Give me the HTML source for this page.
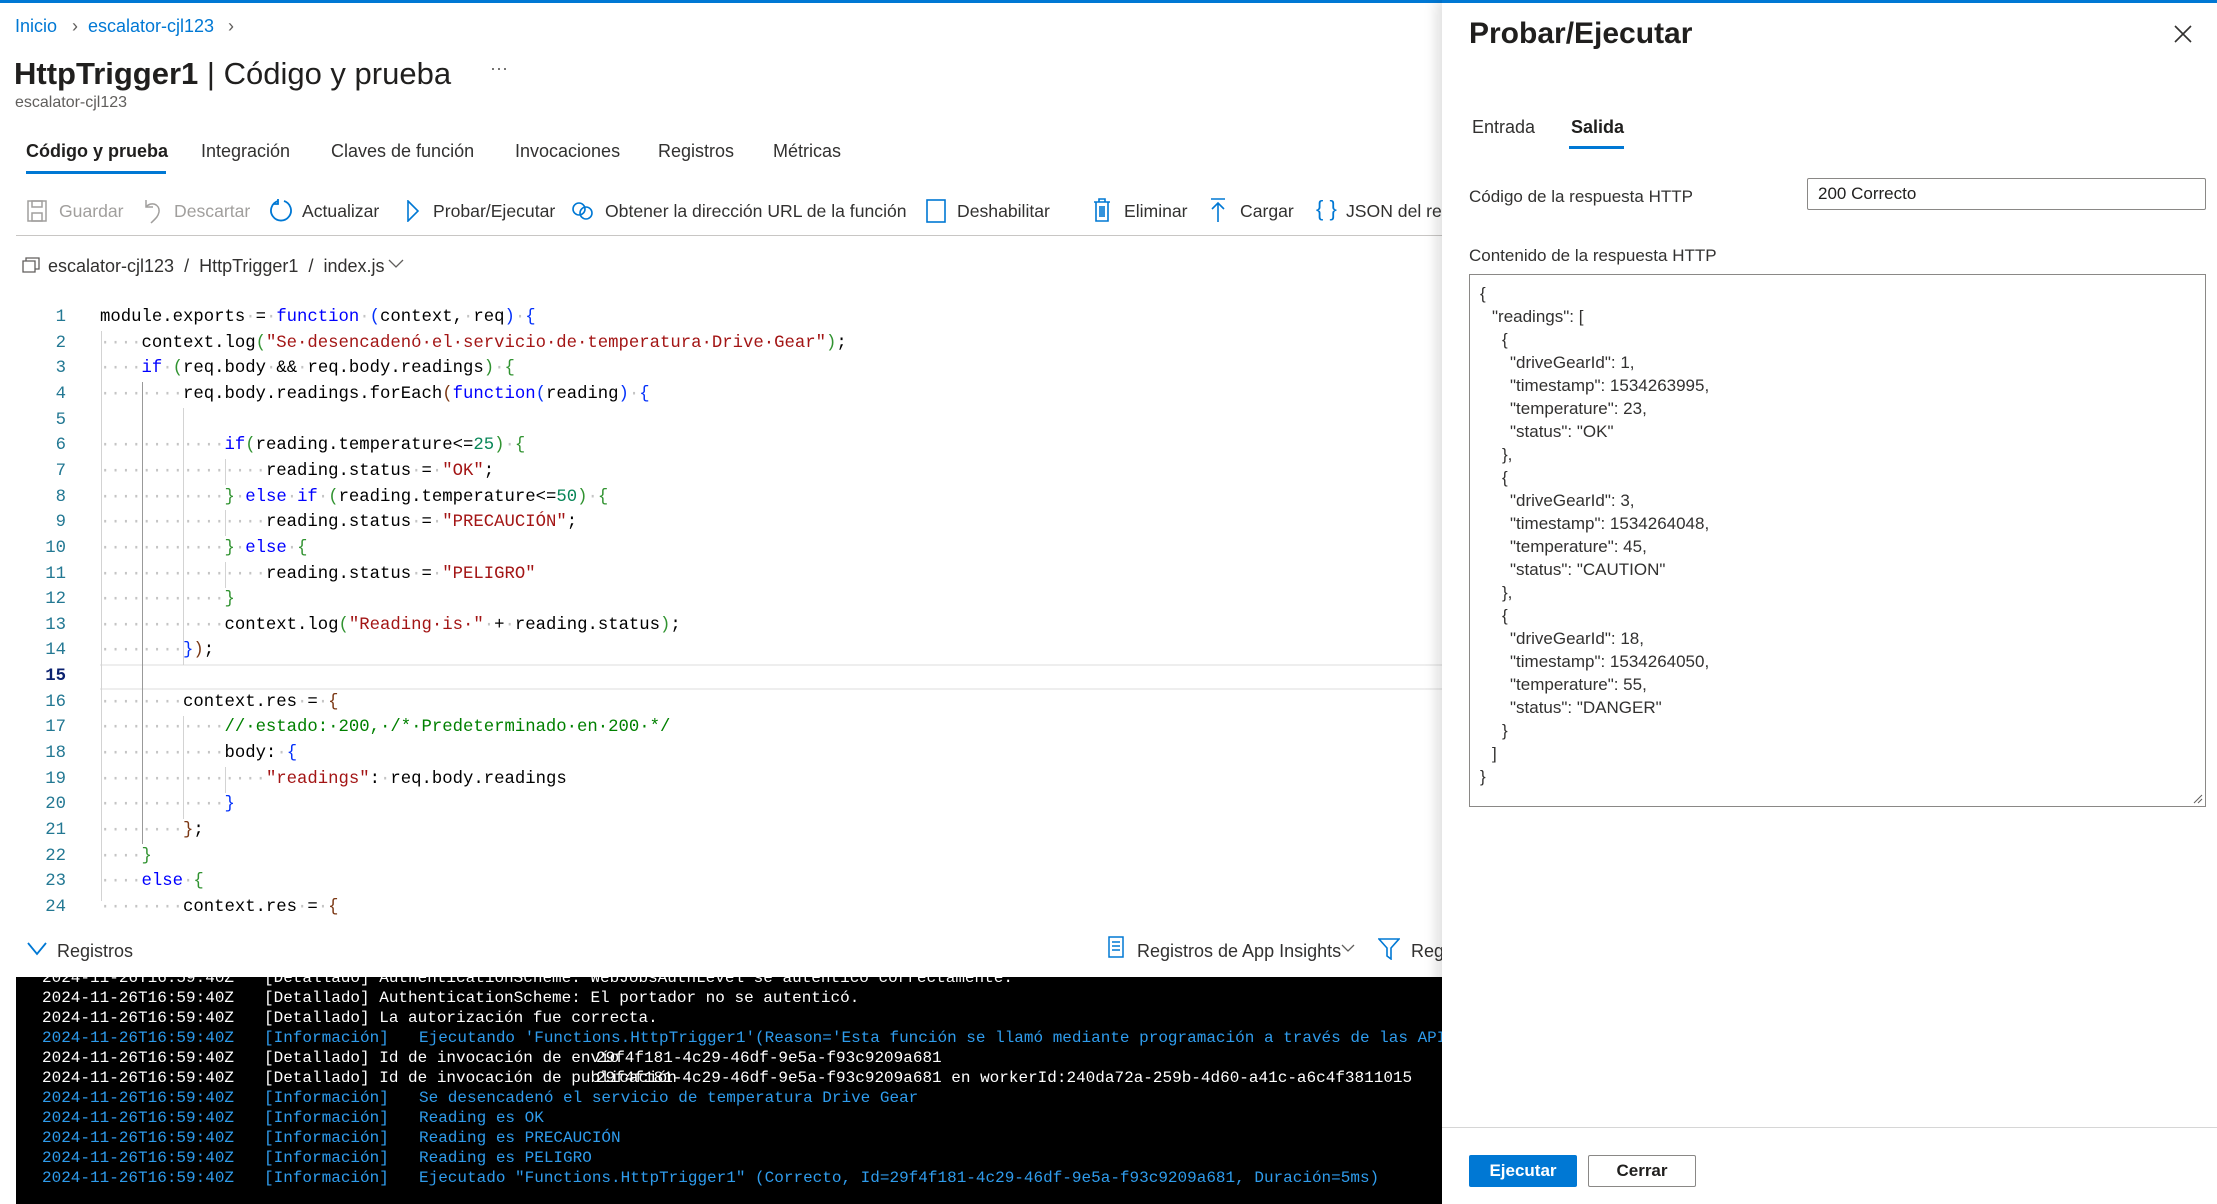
<!DOCTYPE html>
<html><head><meta charset="utf-8">
<style>
*{box-sizing:border-box;margin:0;padding:0}
body{width:2217px;height:1204px;position:relative;overflow:hidden;background:#fff;font-family:"Liberation Sans",sans-serif;color:#323130}
.a{position:absolute;white-space:nowrap}
.topbar{position:absolute;left:0;top:0;width:2217px;height:3px;background:#0078d4}
.ui{font-size:18px;line-height:24px}
.tb{font-size:17.6px;line-height:24px;top:199px}
.dis{color:#a19f9d}
.code{position:absolute;left:0;top:305px;width:1442px;height:620px;overflow:hidden;font-family:"Liberation Mono",monospace;font-size:17.3px}
.ln{position:absolute;left:0;width:66px;text-align:right;color:#237893;line-height:25.65px}
.cl{position:absolute;left:100px;line-height:25.65px;white-space:pre;color:#000}
.k{color:#0000ff}.s{color:#a31515}.n{color:#098658}.c{color:#008000}.d{color:#c4c4c4}
.b1{color:#0431fa}.b2{color:#319331}.b3{color:#7b3814}
.g{position:absolute;width:1px;background:#d3d3d3}
.term{position:absolute;left:16px;top:977px;width:1426px;height:227px;background:#000;overflow:hidden;font-family:"Liberation Mono",monospace;font-size:16px}
.tl{position:absolute;left:0;width:1426px;height:20px;line-height:20px;white-space:pre}
.tl span{position:absolute}
.w{color:#fff}.cy{color:#2f9cec}
.panel{position:absolute;left:1442px;top:0;width:775px;height:1204px;background:#fff;box-shadow:-6px 0 12px rgba(0,0,0,0.12)}
.json{position:absolute;left:1469px;top:274px;width:737px;height:533px;border:1px solid #8a8886;font-size:17px;line-height:22.96px;color:#323130}
.json div{position:absolute;white-space:pre}
</style></head><body>
<div class="topbar"></div>

<div class="a ui" style="left:15px;top:14px;color:#0078d4">Inicio</div>
<div class="a ui" style="left:72px;top:14px;color:#605e5c">&#8250;</div>
<div class="a ui" style="left:88px;top:14px;color:#0078d4">escalator-cjl123</div>
<div class="a ui" style="left:228px;top:14px;color:#605e5c">&#8250;</div>

<div class="a" style="left:14px;top:54px;font-size:31px;line-height:40px;color:#201f1e"><b style="font-weight:600">HttpTrigger1</b> | Código y prueba</div>
<div class="a" style="left:490px;top:58px;font-size:18px;color:#605e5c">···</div>
<div class="a" style="left:15px;top:94px;font-size:16px;color:#605e5c">escalator-cjl123</div>

<div class="a ui" style="left:26px;top:139px;color:#201f1e;font-weight:600">Código y prueba</div>
<div class="a" style="left:26px;top:171px;width:140px;height:3px;background:#0078d4"></div>
<div class="a ui" style="left:201px;top:139px">Integración</div>
<div class="a ui" style="left:331px;top:139px">Claves de función</div>
<div class="a ui" style="left:515px;top:139px">Invocaciones</div>
<div class="a ui" style="left:658px;top:139px">Registros</div>
<div class="a ui" style="left:773px;top:139px">Métricas</div>

<svg class="a" style="left:27px;top:200px" width="20" height="22" viewBox="0 0 20 22" fill="none" stroke="#a19f9d" stroke-width="1.5"><rect x="1" y="1" width="18" height="20"/><rect x="5" y="1" width="10" height="6"/><rect x="5" y="13" width="10" height="8"/></svg>
<div class="a tb dis" style="left:59px">Guardar</div>
<svg class="a" style="left:143px;top:198px" width="20" height="26" viewBox="0 0 20 26" fill="none" stroke="#a19f9d" stroke-width="1.5"><path d="M3 2v7h7"/><path d="M3 9c5-6 14-3 13 5c-1 5-4 7-8 11"/></svg>
<div class="a tb dis" style="left:174px">Descartar</div>
<svg class="a" style="left:269px;top:198px" width="24" height="26" viewBox="0 0 24 26" fill="none" stroke="#0078d4" stroke-width="1.8"><path d="M9 3a10 10 0 1 0 6 0"/><path d="M9 1v5h-5"/></svg>
<div class="a tb" style="left:302px">Actualizar</div>
<svg class="a" style="left:406px;top:200px" width="14" height="22" viewBox="0 0 14 22" fill="none" stroke="#0078d4" stroke-width="1.6"><path d="M2 1l10 10l-10 10z"/></svg>
<div class="a tb" style="left:433px">Probar/Ejecutar</div>
<svg class="a" style="left:571px;top:201px" width="24" height="20" viewBox="0 0 24 20" fill="none" stroke="#0078d4" stroke-width="1.6"><circle cx="8" cy="8" r="6"/><circle cx="15" cy="12" r="6"/></svg>
<div class="a tb" style="left:605px">Obtener la dirección URL de la función</div>
<svg class="a" style="left:926px;top:199px" width="20" height="24"><rect x="1" y="1" width="18" height="22" fill="none" stroke="#0078d4" stroke-width="1.6"/></svg>
<div class="a tb" style="left:957px">Deshabilitar</div>
<svg class="a" style="left:1093px;top:198px" width="18" height="24" viewBox="0 0 18 24" fill="none" stroke="#0078d4" stroke-width="1.6"><path d="M1 4h16M6 4V1h6v3M3 4v19h12V4M7 8v11M9 8v11M11 8v11"/></svg>
<div class="a tb" style="left:1124px">Eliminar</div>
<svg class="a" style="left:1210px;top:198px" width="16" height="24" viewBox="0 0 16 24" fill="none" stroke="#0078d4" stroke-width="1.6"><path d="M1 1h14M8 5v19M2 11l6-6l6 6"/></svg>
<div class="a tb" style="left:1240px">Cargar</div>
<div class="a" style="left:1316px;top:196px;font-size:22px;color:#0078d4">{ }</div>
<div class="a" style="left:1346px;top:199px;font-size:17.6px;line-height:24px;width:96px;overflow:hidden">JSON del request</div>
<div class="a" style="left:16px;top:235px;width:1426px;height:1px;background:#c8c6c4"></div>

<svg class="a" style="left:22px;top:257px" width="18" height="16" viewBox="0 0 18 16" fill="none" stroke="#605e5c" stroke-width="1.3"><path d="M1 4h12v11H1zM4 4V1h13v11h-4"/></svg>
<div class="a ui" style="left:48px;top:254px">escalator-cjl123 &nbsp;/&nbsp; HttpTrigger1 &nbsp;/&nbsp; index.js</div>
<svg class="a" style="left:388px;top:259px" width="16" height="10" viewBox="0 0 16 10" fill="none" stroke="#605e5c" stroke-width="1.3"><path d="M1 1l7 7l7-7"/></svg>

<div class="code">
<div class="a" style="left:100px;top:359px;width:1342px;height:26px;border-top:2px solid #eee;border-bottom:2px solid #eee"></div>
<div class="g" style="left:101px;top:26px;height:570px"></div>
<div class="g" style="left:142px;top:77px;height:462px;background:#999"></div>
<div class="g" style="left:183px;top:103px;height:257px"></div>
<div class="g" style="left:183px;top:411px;height:103px"></div>
<div class="g" style="left:225px;top:154px;height:26px"></div>
<div class="g" style="left:225px;top:205px;height:26px"></div>
<div class="g" style="left:225px;top:257px;height:26px"></div>
<div class="g" style="left:225px;top:462px;height:26px"></div>

<div class="ln" style="top:0">1</div><div class="ln" style="top:25.65px">2</div><div class="ln" style="top:51.3px">3</div><div class="ln" style="top:76.95px">4</div><div class="ln" style="top:102.6px">5</div><div class="ln" style="top:128.25px">6</div><div class="ln" style="top:153.9px">7</div><div class="ln" style="top:179.55px">8</div><div class="ln" style="top:205.2px">9</div><div class="ln" style="top:230.85px">10</div><div class="ln" style="top:256.5px">11</div><div class="ln" style="top:282.15px">12</div><div class="ln" style="top:307.8px">13</div><div class="ln" style="top:333.45px">14</div><div class="ln" style="top:359.1px;color:#0b216f;font-weight:bold">15</div><div class="ln" style="top:384.75px">16</div><div class="ln" style="top:410.4px">17</div><div class="ln" style="top:436.05px">18</div><div class="ln" style="top:461.7px">19</div><div class="ln" style="top:487.35px">20</div><div class="ln" style="top:513px">21</div><div class="ln" style="top:538.65px">22</div><div class="ln" style="top:564.3px">23</div><div class="ln" style="top:589.95px">24</div>

<div class="cl" style="top:0">module.exports<span class="d">·</span>=<span class="d">·</span><span class="k">function</span><span class="d">·</span><span class="b1">(</span>context,<span class="d">·</span>req<span class="b1">)</span><span class="d">·</span><span class="b1">{</span></div>
<div class="cl" style="top:25.65px"><span class="d">····</span>context.log<span class="b2">(</span><span class="s">"Se·desencadenó·el·servicio·de·temperatura·Drive·Gear"</span><span class="b2">)</span>;</div>
<div class="cl" style="top:51.3px"><span class="d">····</span><span class="k">if</span><span class="d">·</span><span class="b2">(</span>req.body<span class="d">·</span>&amp;&amp;<span class="d">·</span>req.body.readings<span class="b2">)</span><span class="d">·</span><span class="b2">{</span></div>
<div class="cl" style="top:76.95px"><span class="d">········</span>req.body.readings.forEach<span class="b3">(</span><span class="k">function</span><span class="b1">(</span>reading<span class="b1">)</span><span class="d">·</span><span class="b1">{</span></div>
<div class="cl" style="top:128.25px"><span class="d">············</span><span class="k">if</span><span class="b2">(</span>reading.temperature&lt;=<span class="n">25</span><span class="b2">)</span><span class="d">·</span><span class="b2">{</span></div>
<div class="cl" style="top:153.9px"><span class="d">················</span>reading.status<span class="d">·</span>=<span class="d">·</span><span class="s">"OK"</span>;</div>
<div class="cl" style="top:179.55px"><span class="d">············</span><span class="b2">}</span><span class="d">·</span><span class="k">else</span><span class="d">·</span><span class="k">if</span><span class="d">·</span><span class="b2">(</span>reading.temperature&lt;=<span class="n">50</span><span class="b2">)</span><span class="d">·</span><span class="b2">{</span></div>
<div class="cl" style="top:205.2px"><span class="d">················</span>reading.status<span class="d">·</span>=<span class="d">·</span><span class="s">"PRECAUCIÓN"</span>;</div>
<div class="cl" style="top:230.85px"><span class="d">············</span><span class="b2">}</span><span class="d">·</span><span class="k">else</span><span class="d">·</span><span class="b2">{</span></div>
<div class="cl" style="top:256.5px"><span class="d">················</span>reading.status<span class="d">·</span>=<span class="d">·</span><span class="s">"PELIGRO"</span></div>
<div class="cl" style="top:282.15px"><span class="d">············</span><span class="b2">}</span></div>
<div class="cl" style="top:307.8px"><span class="d">············</span>context.log<span class="b2">(</span><span class="s">"Reading·is·"</span><span class="d">·</span>+<span class="d">·</span>reading.status<span class="b2">)</span>;</div>
<div class="cl" style="top:333.45px"><span class="d">········</span><span class="b1">}</span><span class="b3">)</span>;</div>
<div class="cl" style="top:384.75px"><span class="d">········</span>context.res<span class="d">·</span>=<span class="d">·</span><span class="b3">{</span></div>
<div class="cl" style="top:410.4px"><span class="d">············</span><span class="c">//·estado:·200,·/*·Predeterminado·en·200·*/</span></div>
<div class="cl" style="top:436.05px"><span class="d">············</span>body:<span class="d">·</span><span class="b1">{</span></div>
<div class="cl" style="top:461.7px"><span class="d">················</span><span class="s">"readings"</span>:<span class="d">·</span>req.body.readings</div>
<div class="cl" style="top:487.35px"><span class="d">············</span><span class="b1">}</span></div>
<div class="cl" style="top:513px"><span class="d">········</span><span class="b3">}</span>;</div>
<div class="cl" style="top:538.65px"><span class="d">····</span><span class="b2">}</span></div>
<div class="cl" style="top:564.3px"><span class="d">····</span><span class="k">else</span><span class="d">·</span><span class="b2">{</span></div>
<div class="cl" style="top:589.95px"><span class="d">········</span>context.res<span class="d">·</span>=<span class="d">·</span><span class="b3">{</span></div>
</div>

<svg class="a" style="left:27px;top:942px" width="20" height="14" viewBox="0 0 20 14" fill="none" stroke="#0078d4" stroke-width="1.8"><path d="M1 1l9 11l9-11"/></svg>
<div class="a ui" style="left:57px;top:939px">Registros</div>
<svg class="a" style="left:1108px;top:936px" width="16" height="22" viewBox="0 0 16 22" fill="none" stroke="#0078d4" stroke-width="1.5"><rect x="1" y="1" width="14" height="20"/><path d="M4 6h8M4 10h8M4 14h8"/></svg>
<div class="a ui" style="left:1137px;top:939px">Registros de App Insights</div>
<svg class="a" style="left:1341px;top:944px" width="14" height="9" viewBox="0 0 14 9" fill="none" stroke="#605e5c" stroke-width="1.3"><path d="M1 1l6 6l6-6"/></svg>
<svg class="a" style="left:1378px;top:938px" width="22" height="22" viewBox="0 0 22 22" fill="none" stroke="#0078d4" stroke-width="1.6"><path d="M1 1h20l-8 9v11l-4-3v-8z"/></svg>
<div class="a ui" style="left:1411px;top:939px;width:31px;overflow:hidden">Registros</div>

<div class="term">
<div class="tl w" style="top:-9px"><span style="left:26px">2024-11-26T16:59:40Z</span><span style="left:248px">[Detallado] AuthenticationScheme: WebJobsAuthLevel se autenticó correctamente.</span></div>
<div class="tl w" style="top:11px"><span style="left:26px">2024-11-26T16:59:40Z</span><span style="left:248px">[Detallado] AuthenticationScheme: El portador no se autenticó.</span></div>
<div class="tl w" style="top:31px"><span style="left:26px">2024-11-26T16:59:40Z</span><span style="left:248px">[Detallado] La autorización fue correcta.</span></div>
<div class="tl cy" style="top:51px"><span style="left:26px">2024-11-26T16:59:40Z</span><span style="left:248px">[Información]</span><span style="left:403px">Ejecutando 'Functions.HttpTrigger1'(Reason='Esta función se llamó mediante programación a través de las API host.')</span></div>
<div class="tl w" style="top:71px"><span style="left:26px">2024-11-26T16:59:40Z</span><span style="left:248px">[Detallado] Id de invocación de envío</span><span style="left:580px">29f4f181-4c29-46df-9e5a-f93c9209a681</span></div>
<div class="tl w" style="top:91px"><span style="left:26px">2024-11-26T16:59:40Z</span><span style="left:248px">[Detallado] Id de invocación de publicación</span><span style="left:580px">29f4f181-4c29-46df-9e5a-f93c9209a681 en workerId:240da72a-259b-4d60-a41c-a6c4f3811015</span></div>
<div class="tl cy" style="top:111px"><span style="left:26px">2024-11-26T16:59:40Z</span><span style="left:248px">[Información]</span><span style="left:403px">Se desencadenó el servicio de temperatura Drive Gear</span></div>
<div class="tl cy" style="top:131px"><span style="left:26px">2024-11-26T16:59:40Z</span><span style="left:248px">[Información]</span><span style="left:403px">Reading es OK</span></div>
<div class="tl cy" style="top:151px"><span style="left:26px">2024-11-26T16:59:40Z</span><span style="left:248px">[Información]</span><span style="left:403px">Reading es PRECAUCIÓN</span></div>
<div class="tl cy" style="top:171px"><span style="left:26px">2024-11-26T16:59:40Z</span><span style="left:248px">[Información]</span><span style="left:403px">Reading es PELIGRO</span></div>
<div class="tl cy" style="top:191px"><span style="left:26px">2024-11-26T16:59:40Z</span><span style="left:248px">[Información]</span><span style="left:403px">Ejecutado "Functions.HttpTrigger1" (Correcto, Id=29f4f181-4c29-46df-9e5a-f93c9209a681, Duración=5ms)</span></div>
</div>

<div class="panel">
<div style="position:absolute;left:0;top:0;width:775px;height:3px;background:#0078d4"></div>
</div>
<div class="a" style="left:1469px;top:15px;font-size:30px;line-height:38px;font-weight:600;color:#201f1e">Probar/Ejecutar</div>
<svg class="a" style="left:2174px;top:25px" width="18" height="18" viewBox="0 0 18 18" stroke="#323130" stroke-width="1.6"><path d="M1 1l16 16M17 1L1 17"/></svg>
<div class="a" style="left:1472px;top:115px;font-size:18px;line-height:24px">Entrada</div>
<div class="a" style="left:1571px;top:115px;font-size:18px;line-height:24px;font-weight:600;color:#201f1e">Salida</div>
<div class="a" style="left:1569px;top:146px;width:55px;height:3px;background:#0078d4"></div>
<div class="a" style="left:1469px;top:185px;font-size:17px;line-height:24px">Código de la respuesta HTTP</div>
<div class="a" style="left:1807px;top:178px;width:399px;height:32px;border:1px solid #8a8886;border-radius:2px"></div>
<div class="a" style="left:1818px;top:183px;font-size:17px;line-height:22px;color:#201f1e">200 Correcto</div>
<div class="a" style="left:1469px;top:244px;font-size:17px;line-height:24px">Contenido de la respuesta HTTP</div>
<div class="json">
<div style="left:10px;top:8px">{</div>
<div style="left:22px;top:31px">"readings": [</div>
<div style="left:32px;top:54px">{</div>
<div style="left:40px;top:77px">"driveGearId": 1,</div>
<div style="left:40px;top:100px">"timestamp": 1534263995,</div>
<div style="left:40px;top:123px">"temperature": 23,</div>
<div style="left:40px;top:146px">"status": "OK"</div>
<div style="left:32px;top:169px">},</div>
<div style="left:32px;top:192px">{</div>
<div style="left:40px;top:215px">"driveGearId": 3,</div>
<div style="left:40px;top:238px">"timestamp": 1534264048,</div>
<div style="left:40px;top:261px">"temperature": 45,</div>
<div style="left:40px;top:284px">"status": "CAUTION"</div>
<div style="left:32px;top:307px">},</div>
<div style="left:32px;top:330px">{</div>
<div style="left:40px;top:353px">"driveGearId": 18,</div>
<div style="left:40px;top:376px">"timestamp": 1534264050,</div>
<div style="left:40px;top:399px">"temperature": 55,</div>
<div style="left:40px;top:422px">"status": "DANGER"</div>
<div style="left:32px;top:445px">}</div>
<div style="left:22px;top:468px">]</div>
<div style="left:10px;top:491px">}</div>
<svg style="position:absolute;right:2px;bottom:2px" width="10" height="10" stroke="#605e5c"><path d="M1 9L9 1M5 9L9 5"/></svg>
</div>
<div class="a" style="left:1442px;top:1127px;width:775px;height:1px;background:#d6d6d6"></div>
<div class="a" style="left:1469px;top:1155px;width:108px;height:32px;background:#0078d4;border-radius:2px;color:#fff;font-size:17px;font-weight:600;line-height:32px;text-align:center">Ejecutar</div>
<div class="a" style="left:1588px;top:1155px;width:108px;height:32px;border:1px solid #8a8886;border-radius:2px;color:#201f1e;font-size:17px;font-weight:600;line-height:30px;text-align:center">Cerrar</div>
</body></html>
